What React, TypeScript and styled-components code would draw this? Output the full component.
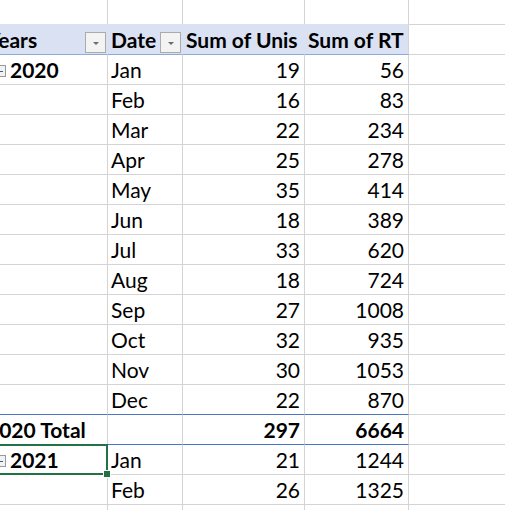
import React from "react";
import styled, { createGlobalStyle } from "styled-components";

const Global = createGlobalStyle`
  html, body { margin: 0; padding: 0; background: #ffffff; }
  body { font-family: Lato, "Liberation Sans", Arial, sans-serif; }
`;

type Line = "grid" | "blue" | "headerBlue" | "fill";

const lineColor = (l?: Line) => {
  switch (l) {
    case "blue":
      return "#4a76c6";
    case "headerBlue":
      return "#8ea9db";
    case "fill":
      return "#d9e1f2";
    default:
      return "#d4d4d4";
  }
};

const Sheet = styled.div`
  width: 505px;
  height: 510px;
  overflow: hidden;
  background: #ffffff;
`;

const Grid = styled.div`
  display: grid;
  grid-template-columns: 124px 75px 122px 104px 130px;
  grid-template-rows: 25px;
  grid-auto-rows: 30px;
  margin-left: -16px;
  font-size: 21px;
  line-height: 24px;
  color: #000000;
`;

interface CellProps {
  $align?: "left" | "right";
  $bold?: boolean;
  $header?: boolean;
  $line?: Line;
  $selected?: boolean;
  $indent?: number;
}

const Cell = styled.div<CellProps>`
  position: relative;
  box-sizing: border-box;
  display: flex;
  align-items: flex-end;
  justify-content: ${(p) => (p.$align === "right" ? "flex-end" : "flex-start")};
  padding: 0 ${(p) => (p.$align === "right" ? "4px" : "0")} 2px
    ${(p) => (p.$align === "right" ? "0" : `${p.$indent ?? 3}px`)};
  background: ${(p) => (p.$header ? "#d9e1f2" : "#ffffff")};
  border-right: 1px solid ${(p) => (p.$header ? "#d9e1f2" : "#d4d4d4")};
  border-bottom: 1px solid ${(p) => lineColor(p.$line)};
  font-weight: ${(p) => (p.$bold ? 700 : 400)};
  white-space: nowrap;
  overflow: ${(p) => (p.$selected ? "visible" : "hidden")};
  z-index: ${(p) => (p.$selected ? 2 : 1)};
`;

const HeaderCell = styled(Cell)`
  justify-content: space-between;
  padding-right: 1px;
  padding-bottom: 1px;
`;

const HeaderText = styled.span`
  overflow: hidden;
  margin-bottom: 1px;
`;

const DropButton = styled.span`
  box-sizing: border-box;
  flex: none;
  width: 21px;
  height: 21px;
  border: 1px solid #ababab;
  background: #f3f3f3;
  display: flex;
  align-items: center;
  justify-content: center;
  align-self: flex-end;

  &::after {
    content: "";
    width: 0;
    height: 0;
    border-left: 3px solid transparent;
    border-right: 3px solid transparent;
    border-top: 3px solid #6b6b6b;
    margin-top: 1px;
  }
`;

const ExpandBox = styled.span`
  box-sizing: border-box;
  flex: none;
  width: 12px;
  height: 12px;
  margin: 0 4px 5px 0;
  border: 1px solid #9a9a9a;
  background: #f2f2f2;
  display: flex;
  align-items: center;
  justify-content: center;

  &::after {
    content: "";
    width: 6px;
    height: 1px;
    background: #3d5f96;
  }
`;

const Selection = styled.span`
  position: absolute;
  top: -1px;
  bottom: -1px;
  left: 0;
  right: -1px;
  border: 2px solid #217346;
  pointer-events: none;
`;

const FillHandle = styled.span`
  position: absolute;
  right: -5px;
  bottom: -5px;
  width: 6px;
  height: 6px;
  background: #217346;
  border: 1px solid #ffffff;
  box-sizing: content-box;
`;

type Month = { m: string; u: number; rt: number };

const year2020: Month[] = [
  { m: "Jan", u: 19, rt: 56 },
  { m: "Feb", u: 16, rt: 83 },
  { m: "Mar", u: 22, rt: 234 },
  { m: "Apr", u: 25, rt: 278 },
  { m: "May", u: 35, rt: 414 },
  { m: "Jun", u: 18, rt: 389 },
  { m: "Jul", u: 33, rt: 620 },
  { m: "Aug", u: 18, rt: 724 },
  { m: "Sep", u: 27, rt: 1008 },
  { m: "Oct", u: 32, rt: 935 },
  { m: "Nov", u: 30, rt: 1053 },
  { m: "Dec", u: 22, rt: 870 },
];

const year2021: Month[] = [
  { m: "Jan", u: 21, rt: 1244 },
  { m: "Feb", u: 26, rt: 1325 },
];

const EmptyRow: React.FC<{ line?: Line; pivotLine?: Line }> = ({ line, pivotLine }) => (
  <>
    <Cell $line={pivotLine ?? line} />
    <Cell $line={pivotLine ?? line} />
    <Cell $line={pivotLine ?? line} />
    <Cell $line={pivotLine ?? line} />
    <Cell $line={line} />
  </>
);

export default function App() {
  return (
    <Sheet>
      <Global />
      <Grid>
        <EmptyRow line="grid" pivotLine="fill" />

        <HeaderCell $header $bold $line="headerBlue">
          <HeaderText>Years</HeaderText>
          <DropButton />
        </HeaderCell>
        <HeaderCell $header $bold $line="headerBlue">
          <HeaderText>Date</HeaderText>
          <DropButton />
        </HeaderCell>
        <HeaderCell $header $bold $line="headerBlue">
          <HeaderText>Sum of Unis</HeaderText>
        </HeaderCell>
        <HeaderCell $header $bold $line="headerBlue" style={{ borderRightColor: "#d4d4d4" }}>
          <HeaderText>Sum of RT</HeaderText>
        </HeaderCell>
        <Cell />

        {year2020.map((r, i) => {
          const last = i === year2020.length - 1;
          const pl: Line = last ? "blue" : "grid";
          return (
            <React.Fragment key={`a-${r.m}`}>
              <Cell $bold $indent={10} $line={pl}>
                {i === 0 && (
                  <>
                    <ExpandBox />
                    2020
                  </>
                )}
              </Cell>
              <Cell $line={pl}>{r.m}</Cell>
              <Cell $align="right" $line={pl}>
                {r.u}
              </Cell>
              <Cell $align="right" $line={pl}>
                {r.rt}
              </Cell>
              <Cell />
            </React.Fragment>
          );
        })}

        <Cell $bold $line="blue">2020 Total</Cell>
        <Cell $line="blue" />
        <Cell $align="right" $bold $line="blue">
          297
        </Cell>
        <Cell $align="right" $bold $line="blue">
          6664
        </Cell>
        <Cell />

        {year2021.map((r, i) => (
          <React.Fragment key={`b-${r.m}`}>
            <Cell $bold $indent={10} $selected={i === 0}>
              {i === 0 && (
                <>
                  <ExpandBox />
                  2021
                  <Selection>
                    <FillHandle />
                  </Selection>
                </>
              )}
            </Cell>
            <Cell>{r.m}</Cell>
            <Cell $align="right">{r.u}</Cell>
            <Cell $align="right">{r.rt}</Cell>
            <Cell />
          </React.Fragment>
        ))}

        <EmptyRow />
      </Grid>
    </Sheet>
  );
}
